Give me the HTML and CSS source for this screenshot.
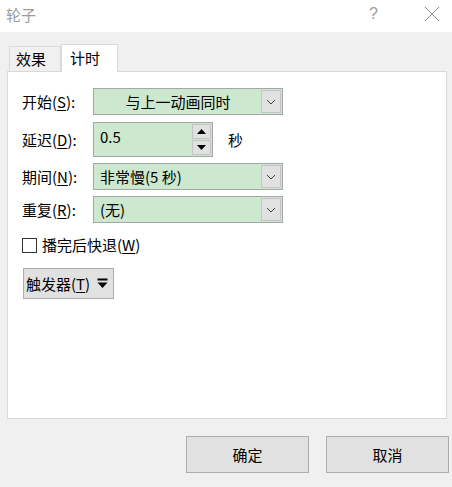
FILE: index.html
```html
<!DOCTYPE html>
<html lang="zh">
<head>
<meta charset="utf-8">
<link rel="stylesheet" href="styles.css">
</head>
<body>
<div class="window">
  <div class="titlebar">
    <span class="title">轮子</span>
    <span class="help">?</span>
    <svg class="close" width="16" height="16" viewBox="0 0 16 16"><path d="M1 1L15 15M15 1L1 15" stroke="#8a8a8a" stroke-width="1" fill="none"/></svg>
  </div>
  <div class="content">
    <div class="tabs">
      <div class="tab">效果</div>
      <div class="tab active">计时</div>
    </div>
    <div class="panel">
      <div class="row r1">
        <span class="label">开始(<u>S</u>):</span>
        <div class="combo center"><span class="val">与上一动画同时</span><span class="drop"><svg width="10" height="6" viewBox="0 0 10 6"><path d="M1 1L5 5L9 1" stroke="#444" fill="none"/></svg></span></div>
      </div>
      <div class="row r2">
        <span class="label">延迟(<u>D</u>):</span>
        <div class="spin"><span class="val">0.5</span>
          <div class="spinbtns">
            <span class="sb"><svg width="9" height="5" viewBox="0 0 9 5"><path d="M0 5L4.5 0L9 5Z" fill="#000"/></svg></span>
            <span class="sb"><svg width="9" height="5" viewBox="0 0 9 5"><path d="M0 0L4.5 5L9 0Z" fill="#000"/></svg></span>
          </div>
        </div>
        <span class="unit">秒</span>
      </div>
      <div class="row r3">
        <span class="label">期间(<u>N</u>):</span>
        <div class="combo"><span class="val">非常慢(5 秒)</span><span class="drop"><svg width="10" height="6" viewBox="0 0 10 6"><path d="M1 1L5 5L9 1" stroke="#444" fill="none"/></svg></span></div>
      </div>
      <div class="row r4">
        <span class="label">重复(<u>R</u>):</span>
        <div class="combo"><span class="val">(无)</span><span class="drop"><svg width="10" height="6" viewBox="0 0 10 6"><path d="M1 1L5 5L9 1" stroke="#444" fill="none"/></svg></span></div>
      </div>
      <div class="check">
        <span class="box"></span>
        <span>播完后快退(<u>W</u>)</span>
      </div>
      <div class="trigger">
        <span>触发器(<u>T</u>)</span>
        <svg width="11" height="11" viewBox="0 0 11 11"><rect x="0.5" y="0.5" width="10" height="2" fill="#000"/><path d="M0.5 4.5L5.5 10L10.5 4.5Z" fill="#000"/></svg>
      </div>
    </div>
    <div class="buttons">
      <div class="btn">确定</div>
      <div class="btn">取消</div>
    </div>
  </div>
</div>
</body>
</html>
```
FILE: styles.css
```css
* { box-sizing: border-box; }
html, body { margin: 0; padding: 0; }
body {
  width: 452px;
  height: 487px;
  background: #f0f0f0;
  font-family: "Noto Sans CJK SC", "Microsoft YaHei", sans-serif;
  font-size: 15px;
  color: #000;
  overflow: hidden;
}
u { text-decoration: underline; text-underline-offset: 2px; }
.titlebar {
  height: 32px;
  background: #fff;
  display: flex;
  align-items: center;
  padding-left: 6px;
  position: relative;
}
.title { color: #9a9a9a; line-height: 20px; margin-top: -2px; }
.help {
  margin-left: auto;
  color: #9a9a9a;
  font-family: "Liberation Sans", sans-serif;
  font-size: 16px;
  margin-right: 46px;
  margin-top: -4px;
}
.close { margin-right: 12px; margin-top: -4px; }
.content { padding: 12px 5px 0 7px; }
.tabs {
  display: flex;
  align-items: flex-end;
  height: 27px;
  padding-left: 2px;
}
.tab {
  height: 25px;
  padding: 0 6px;
  width: 52px;
  border: 1px solid #d9d9d9;
  border-bottom: none;
  background: #f0f0f0;
  line-height: 24px;
  padding-left: 6px;
}
.tab.active {
  height: 28px;
  width: 57px;
  background: #fff;
  border-left: 1px solid #d9d9d9;
  margin-bottom: -1px;
  position: relative;
  z-index: 1;
  padding-left: 8px;
  line-height: 26px;
}
.panel {
  height: 348px;
  background: #fff;
  border: 1px solid #d9d9d9;
  padding: 16px 0 0 14px;
  display: flex;
  flex-direction: column;
}
.row { display: flex; align-items: center; }
.label { width: 71px; line-height: 20px; }
.r2 { margin-top: 7px; }
.r3 { margin-top: 6px; }
.r4 { margin-top: 6px; }
.combo {
  width: 190px;
  height: 27px;
  border: 1px solid #a6a6a6;
  background: #cce8cf;
  display: flex;
  align-items: center;
  padding: 1px;
}
.combo .val { flex: 1; padding-left: 5px; line-height: 20px; }
.combo.center .val { text-align: center; padding-left: 0; }
.drop {
  width: 20px;
  height: 23px;
  background: #e1e1e1;
  border: 1px solid #c4c4c4;
  display: flex;
  align-items: center;
  justify-content: center;
}
.spin {
  width: 120px;
  height: 35px;
  border: 1px solid #a6a6a6;
  background: #cce8cf;
  display: flex;
  padding: 1px;
}
.spin .val { flex: 1; padding-left: 5px; line-height: 20px; padding-top: 3px; }
.spinbtns {
  width: 19px;
  display: flex;
  flex-direction: column;
  gap: 1px;
}
.sb {
  flex: 1;
  background: #e1e1e1;
  border: 1px solid #c4c4c4;
  display: flex;
  align-items: center;
  justify-content: center;
}
.unit { margin-left: 15px; line-height: 20px; }
.check {
  display: flex;
  align-items: center;
  margin-top: 12px;
  line-height: 20px;
}
.box {
  width: 15px;
  height: 15px;
  border: 1px solid #333;
  background: #fff;
  margin-right: 5px;
}
.trigger {
  margin-top: 13px;
  margin-left: 1px;
  width: 91px;
  height: 31px;
  background: #e1e1e1;
  border: 1px solid #adadad;
  display: flex;
  align-items: center;
  padding-left: 2px;
  gap: 7px;
  line-height: 20px;
}
.buttons {
  display: flex;
  justify-content: flex-end;
  gap: 17px;
  margin-top: 17px;
  padding-right: -2px;
  margin-right: -2px;
}
.btn {
  width: 123px;
  height: 37px;
  background: #e1e1e1;
  border: 1px solid #adadad;
  display: flex;
  align-items: center;
  justify-content: center;
  line-height: 20px;
}
```
